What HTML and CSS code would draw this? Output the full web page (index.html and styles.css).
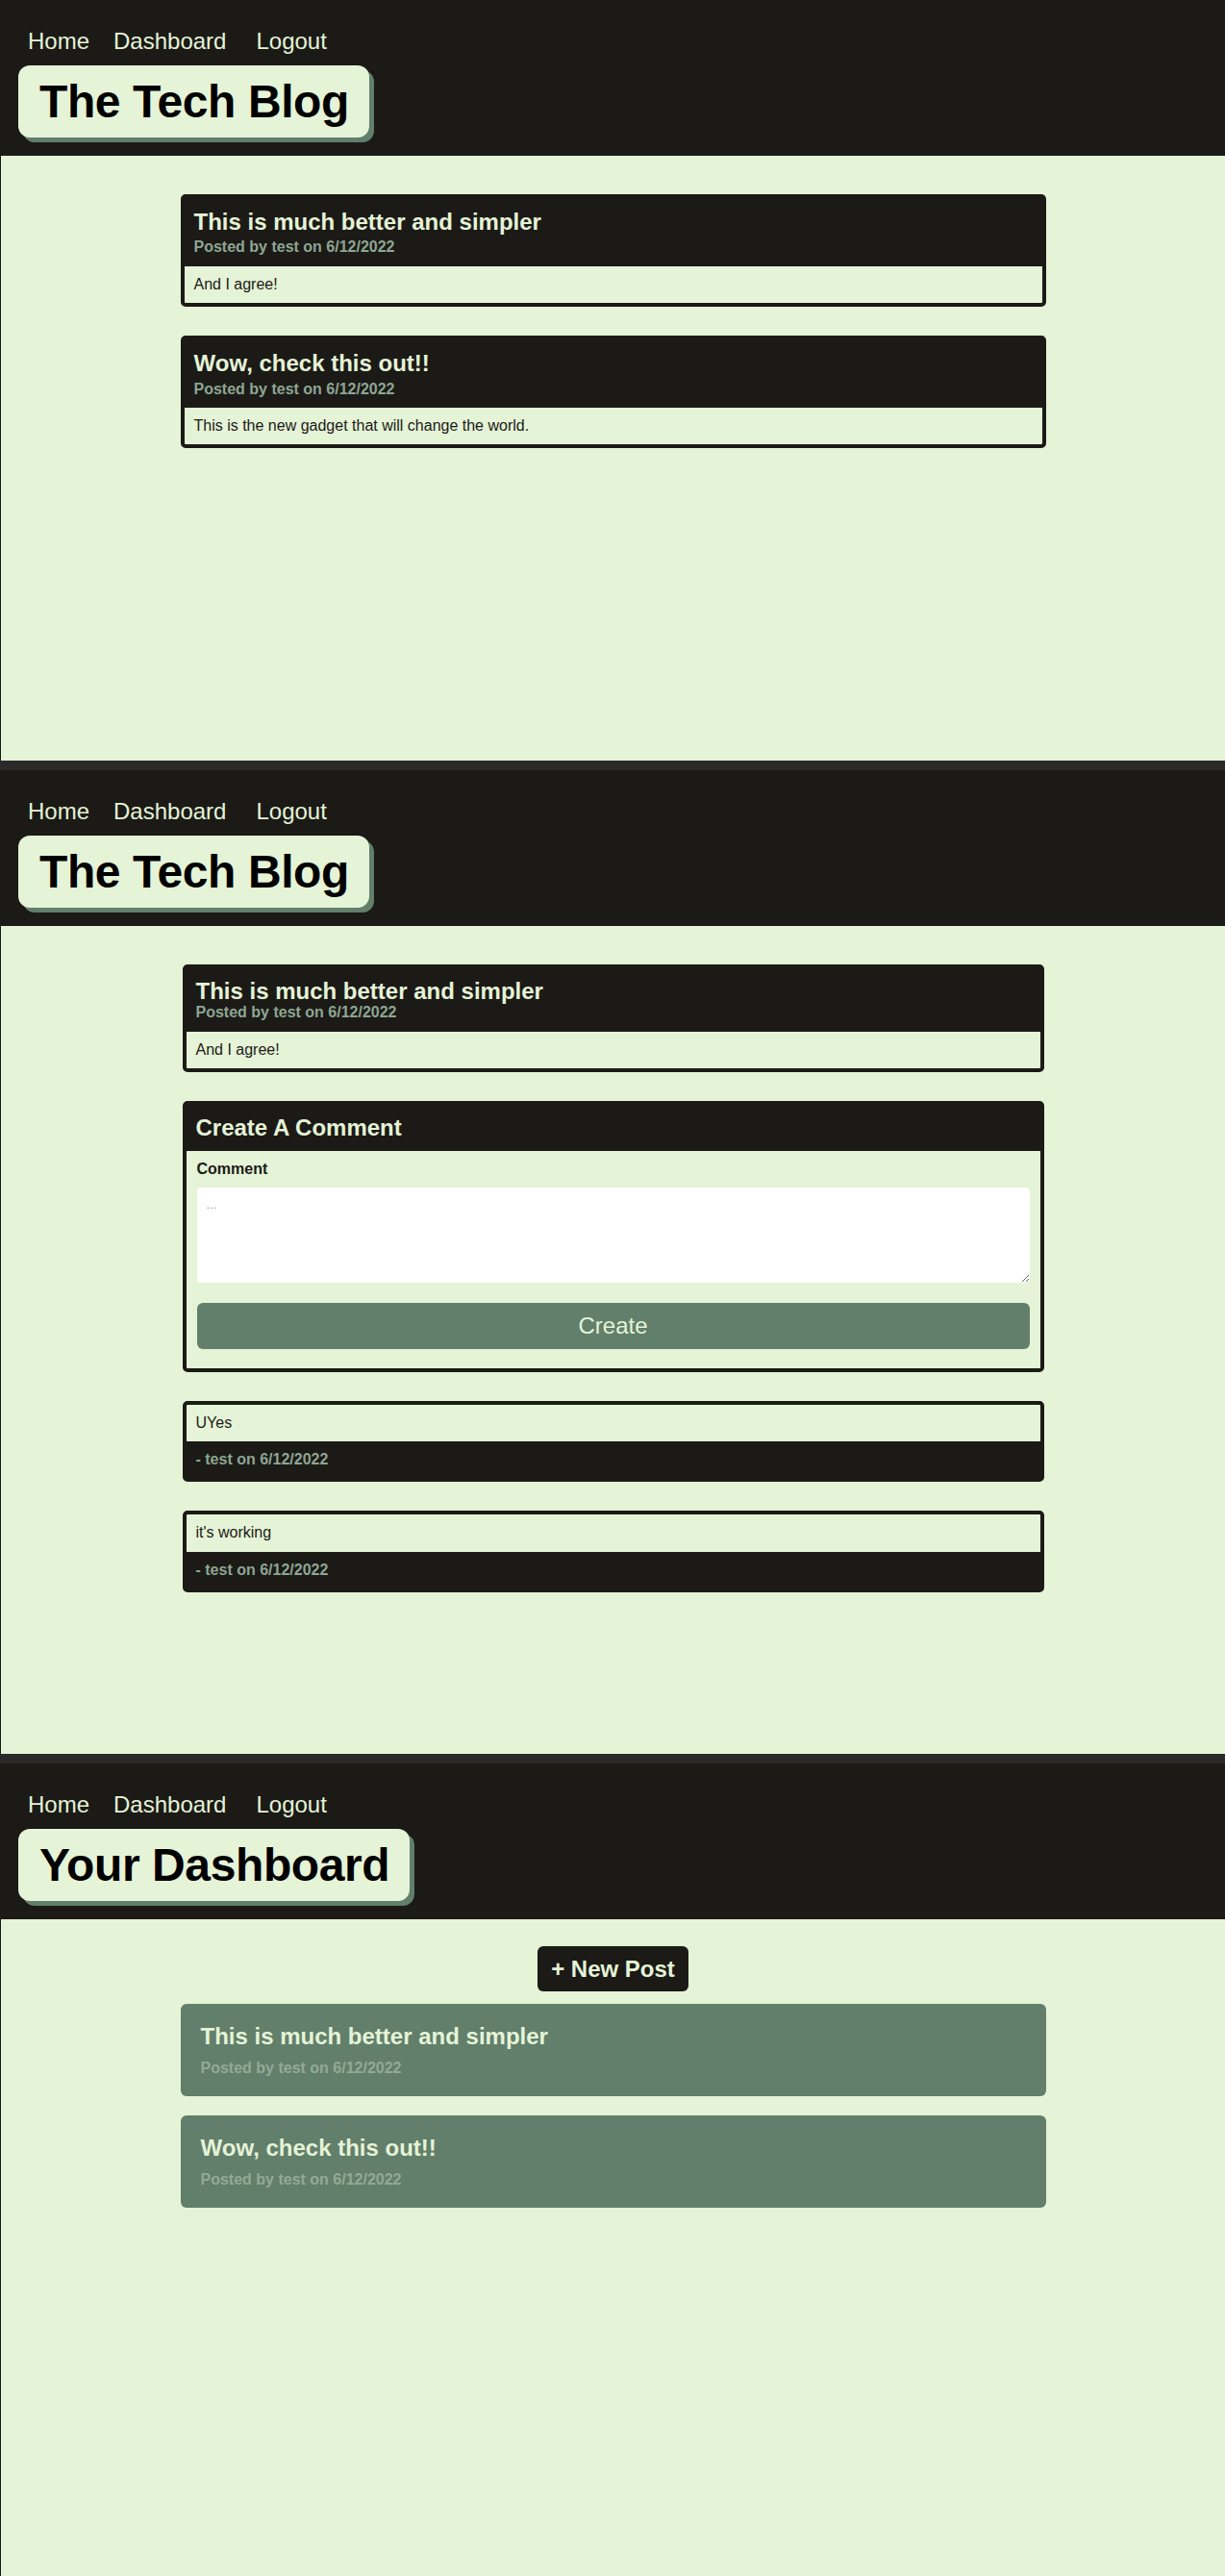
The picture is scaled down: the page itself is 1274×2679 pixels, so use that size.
FILE: index.html
```html
<!DOCTYPE html>
<html lang="en">
<head>
<meta charset="utf-8">
<title>The Tech Blog</title>
<link rel="stylesheet" href="styles.css">
</head>
<body>
  <section class="screen screen-home">
    <header class="site-header">
      <nav class="nav">
        <a class="nav-link" href="#">Home</a>
        <a class="nav-link" href="#">Dashboard</a>
        <a class="nav-link nav-logout" href="#">Logout</a>
      </nav>
      <h1 class="site-title">The Tech Blog</h1>
    </header>
    <main class="content content-wide">
      <article class="card">
        <div class="card-head card-head-spaced">
          <h2 class="card-title">This is much better and simpler</h2>
          <p class="card-meta">Posted by test on 6/12/2022</p>
        </div>
        <div class="card-body">And I agree!</div>
      </article>
      <article class="card">
        <div class="card-head card-head-spaced">
          <h2 class="card-title">Wow, check this out!!</h2>
          <p class="card-meta">Posted by test on 6/12/2022</p>
        </div>
        <div class="card-body">This is the new gadget that will change the world.</div>
      </article>
    </main>
  </section>

  <section class="screen screen-post">
    <header class="site-header">
      <nav class="nav">
        <a class="nav-link" href="#">Home</a>
        <a class="nav-link" href="#">Dashboard</a>
        <a class="nav-link nav-logout" href="#">Logout</a>
      </nav>
      <h1 class="site-title">The Tech Blog</h1>
    </header>
    <main class="content content-narrow">
      <article class="card">
        <div class="card-head">
          <h2 class="card-title">This is much better and simpler</h2>
          <p class="card-meta">Posted by test on 6/12/2022</p>
        </div>
        <div class="card-body">And I agree!</div>
      </article>
      <form class="card">
        <div class="card-head">
          <h2 class="card-title">Create A Comment</h2>
        </div>
        <div class="card-body form-body">
          <label class="form-label" for="comment">Comment</label>
          <textarea class="form-textarea" id="comment" placeholder="..."></textarea>
          <button class="form-button" type="button">Create</button>
        </div>
      </form>
      <article class="card">
        <div class="card-body">UYes</div>
        <div class="card-foot">- test on 6/12/2022</div>
      </article>
      <article class="card">
        <div class="card-body">it's working</div>
        <div class="card-foot">- test on 6/12/2022</div>
      </article>
    </main>
  </section>

  <section class="screen screen-dash">
    <header class="site-header">
      <nav class="nav">
        <a class="nav-link" href="#">Home</a>
        <a class="nav-link" href="#">Dashboard</a>
        <a class="nav-link nav-logout" href="#">Logout</a>
      </nav>
      <h1 class="site-title">Your Dashboard</h1>
    </header>
    <main class="dash">
      <button class="new-post" type="button">+ New Post</button>
      <div class="dash-list">
        <article class="dash-card">
          <h2 class="dash-title">This is much better and simpler</h2>
          <p class="dash-meta">Posted by test on 6/12/2022</p>
        </article>
        <article class="dash-card">
          <h2 class="dash-title">Wow, check this out!!</h2>
          <p class="dash-meta">Posted by test on 6/12/2022</p>
        </article>
      </div>
    </main>
  </section>
</body>
</html>
```

FILE: styles.css
```css
* {
  box-sizing: border-box;
}

html, body {
  margin: 0;
  padding: 0;
}

body {
  background: #2a2a2a;
  font-family: "Liberation Sans", Arial, sans-serif;
  color: #1b1a16;
  display: flex;
  flex-direction: column;
  gap: 10px;
}

.screen {
  background: #e5f3d7;
  border-left: 1px solid #1b1a16;
  overflow: hidden;
}

.screen-home {
  height: 791px;
}

.screen-post {
  height: 1023px;
}

.screen-dash {
  height: 845px;
}

.site-header {
  background: #1b1a16;
  padding: 29px 19px 19px 18px;
}

.nav {
  display: flex;
  gap: 25px;
  padding-left: 10px;
  margin-bottom: 11px;
}

.nav-link {
  color: #e5f3d7;
  text-decoration: none;
  font-size: 24px;
  line-height: 27.6px;
}

.nav-logout {
  margin-left: 6px;
}

.site-title {
  display: inline-block;
  margin: 0;
  background: #e5f3d7;
  color: #000;
  font-size: 48px;
  font-weight: bold;
  letter-spacing: -0.4px;
  line-height: 55px;
  padding: 10px 21px 10px 22px;
  border-radius: 12px;
  box-shadow: 5px 5px 0 #617f6b;
}

.content {
  margin: 40px auto 0;
  display: flex;
  flex-direction: column;
  gap: 30px;
}

.content-wide {
  width: 900px;
}

.content-narrow {
  width: 896px;
}

.card {
  margin: 0;
  border: 4px solid #1b1a16;
  border-radius: 5px;
  background: #1b1a16;
  overflow: hidden;
}

.card-head {
  padding: 10px 10px 10px 10px;
}

.card-head-spaced {
  padding-top: 11px;
}

.card-head-spaced .card-title {
  margin-bottom: 4px;
}

.card-title {
  margin: 0;
  color: #e5f3d7;
  font-size: 24px;
  font-weight: bold;
  line-height: 27.6px;
}

.card-meta {
  margin: 0;
  color: #8ea693;
  font-size: 16px;
  font-weight: bold;
  line-height: 18.4px;
}

.card-body {
  background: #e5f3d7;
  padding: 10px;
  font-size: 16px;
  line-height: 18.4px;
  color: #1b1a16;
}

.card-foot {
  padding: 10px;
  font-size: 16px;
  font-weight: bold;
  line-height: 18.4px;
  color: #8ea693;
}

.form-body {
  display: flex;
  flex-direction: column;
  padding: 10px 11px 20px;
}

.form-label {
  font-weight: bold;
  font-size: 16px;
  line-height: 18.4px;
  margin-bottom: 10px;
}

.form-textarea {
  display: block;
  width: 100%;
  height: 99px;
  border: none;
  border-radius: 4px;
  background: #fff;
  padding: 10px;
  font-family: "Liberation Sans", Arial, sans-serif;
  font-size: 13px;
  color: #1b1a16;
  margin-bottom: 21px;
}

.form-textarea::placeholder {
  color: #9a9a9a;
}

.form-button {
  display: block;
  width: 100%;
  border: none;
  border-radius: 6px;
  background: #617f6b;
  color: #e5f3d7;
  font-family: "Liberation Sans", Arial, sans-serif;
  font-size: 24px;
  line-height: 27.6px;
  padding: 10px;
}

.dash {
  display: flex;
  flex-direction: column;
  align-items: center;
  padding-top: 28px;
}

.new-post {
  border: none;
  border-radius: 6px;
  background: #1b1a16;
  color: #e5f3d7;
  font-family: "Liberation Sans", Arial, sans-serif;
  font-size: 24px;
  font-weight: bold;
  line-height: 27.6px;
  padding: 10px 14px;
  margin-bottom: 13px;
}

.dash-list {
  width: 900px;
  display: flex;
  flex-direction: column;
  gap: 20px;
}

.dash-card {
  background: #617f6b;
  border-radius: 6px;
  padding: 20px 20px 20px 21px;
}

.dash-title {
  margin: 0 0 10px;
  color: #e5f3d7;
  font-size: 24px;
  font-weight: bold;
  line-height: 27.6px;
}

.dash-meta {
  margin: 0;
  color: #93a996;
  font-size: 16px;
  font-weight: bold;
  line-height: 18.4px;
}
```
